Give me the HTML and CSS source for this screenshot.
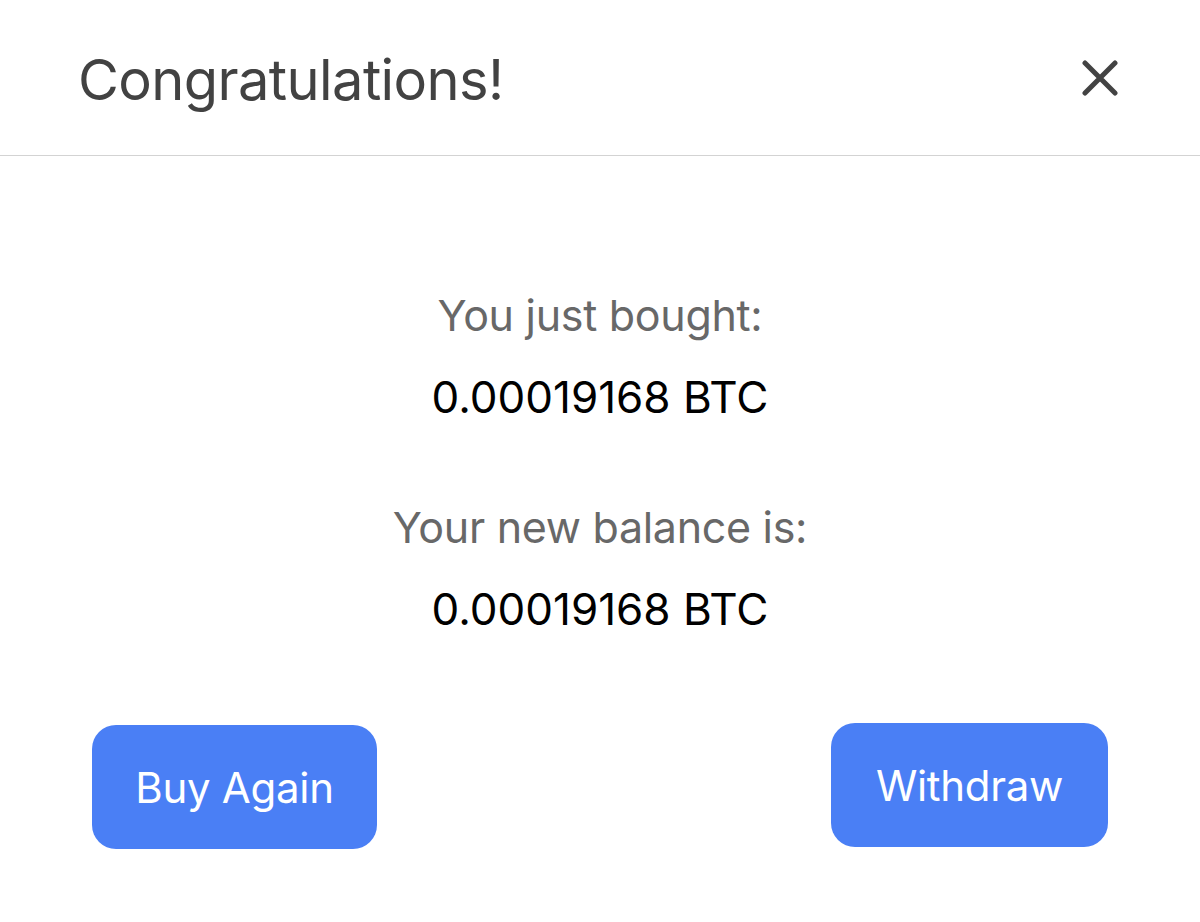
FILE: index.html
```html
<!DOCTYPE html>
<html lang="en">
<head>
<meta charset="utf-8">
<title>Congratulations</title>
<link rel="stylesheet" href="styles.css">
</head>
<body>
<div class="modal">
  <header class="modal-header">
    <h1 class="modal-title">Congratulations!</h1>
    <button class="close-btn" aria-label="Close">
      <svg width="36" height="36" viewBox="0 0 36 36"><path d="M3 3 L33 33 M33 3 L3 33" stroke="#434343" stroke-width="5" stroke-linecap="round" fill="none"/></svg>
    </button>
  </header>
  <main class="modal-body">
    <p class="label">You just bought:</p>
    <p class="value">0.00019168 BTC</p>
    <p class="label label-second">Your new balance is:</p>
    <p class="value">0.00019168 BTC</p>
  </main>
  <footer class="modal-footer">
    <button class="btn btn-buy">Buy Again</button>
    <button class="btn btn-withdraw">Withdraw</button>
  </footer>
</div>
</body>
</html>
```
FILE: styles.css
```css
html, body {
  margin: 0;
  padding: 0;
  background: #ffffff;
}
body {
  font-family: Inter, "Noto Sans", "Liberation Sans", sans-serif;
  width: 1200px;
  height: 922px;
  overflow: hidden;
}
.modal-header {
  height: 156px;
  box-sizing: border-box;
  border-bottom: 1px solid #d3d3d3;
  display: flex;
  align-items: center;
  justify-content: space-between;
  padding: 0 82px 0 78px;
}
.modal-title {
  margin: 0;
  font-size: 56px;
  font-weight: 400;
  color: #424242;
  letter-spacing: -0.6px;
  line-height: 1;
  padding-top: 4px;
}
.close-btn {
  border: 0;
  background: none;
  padding: 0;
  width: 36px;
  height: 36px;
  display: flex;
  align-items: center;
  justify-content: center;
}
.modal-body {
  display: flex;
  flex-direction: column;
  align-items: center;
  padding-top: 138px;
}
.label, .value {
  margin: 0;
  line-height: 1;
  letter-spacing: -0.3px;
}
.label {
  color: #686868;
  font-size: 43px;
}
.value {
  color: #000000;
  font-size: 44px;
  letter-spacing: 0;
  margin-top: 38px;
}
.label-second {
  margin-top: 87px;
}
.modal-footer {
  display: flex;
  justify-content: space-between;
  align-items: flex-start;
  padding: 0 92px 0 92px;
  margin-top: 92px;
}
.btn {
  border: 0;
  background: #4a7ff5;
  color: #ffffff;
  font-family: inherit;
  font-size: 42px;
  letter-spacing: -0.3px;
  border-radius: 24px;
  height: 124px;
  padding: 0;
}
.btn-buy {
  width: 285px;
  margin-top: 2px;
}
.btn-withdraw {
  width: 277px;
}
```
